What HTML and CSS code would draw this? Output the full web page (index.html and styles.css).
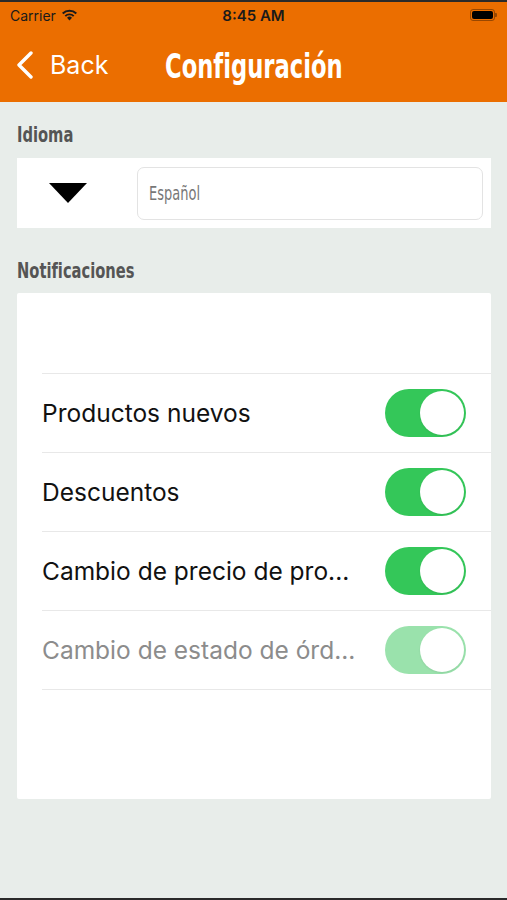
FILE: index.html
```html
<!DOCTYPE html>
<html lang="es">
    <head>
        <meta charset="UTF-8">
        <meta name="viewport" content="width=device-width, initial-scale=1.0">
        <title>Configuración</title>
        <link rel="stylesheet" href="styles.css">
    </head>

    <body>
        <div id="header">
            <div class="statusBar">
                <div class="carrier">
                    <span>Carrier</span>
                    <svg width="17" height="12" viewBox="0 0 17 12">
                        <path d="M8.5 11.5 L6 8.8 A3.6 3.6 0 0 1 11 8.8 Z" fill="#1a1a1a"/>
                        <path d="M3.6 6.4 A7 7 0 0 1 13.4 6.4 L12 7.8 A5 5 0 0 0 5 7.8 Z" fill="#1a1a1a"/>
                        <path d="M1 3.8 A10.8 10.8 0 0 1 16 3.8 L14.6 5.2 A8.8 8.8 0 0 0 2.4 5.2 Z" fill="#1a1a1a"/>
                    </svg>
                </div>
                <div class="time">8:45 AM</div>
                <div class="battery">
                    <div class="batteryBody"><div class="batteryFill"></div></div>
                    <div class="batteryTip"></div>
                </div>
            </div>
            <div class="navBar">
                <div class="back">
                    <svg width="18" height="28" viewBox="0 0 18 28">
                        <path d="M15 2 L3 14 L15 26" fill="none" stroke="#fff" stroke-width="3.4" stroke-linecap="round" stroke-linejoin="round"/>
                    </svg>
                    <span>Back</span>
                </div>
                <h1>Configuración</h1>
            </div>
        </div>

        <div id="content">
            <h2 class="sectionTitle"><span>Idioma</span></h2>
            <div class="langBox">
                <div class="arrowCell"><div class="arrow"></div></div>
                <div class="langInput"><span>Español</span></div>
            </div>

            <h2 class="sectionTitle second"><span>Notificaciones</span></h2>
            <div class="card">
                <div class="cardTop"></div>
                <div class="row">
                    <span class="rowText">Productos nuevos</span>
                    <div class="toggle"><div class="knob"></div></div>
                </div>
                <div class="row">
                    <span class="rowText">Descuentos</span>
                    <div class="toggle"><div class="knob"></div></div>
                </div>
                <div class="row">
                    <span class="rowText">Cambio de precio de pro...</span>
                    <div class="toggle"><div class="knob"></div></div>
                </div>
                <div class="row disabled">
                    <span class="rowText">Cambio de estado de órd...</span>
                    <div class="toggle"><div class="knob"></div></div>
                </div>
            </div>
        </div>
    </body>
</html>
```

FILE: styles.css
```css
html{
    background: #e8edea;
}

body{
    margin: 0;
    height: 900px;
    box-sizing: border-box;
    background: #e8edea;
    border-top: 2px solid #2a2a2a;
    border-bottom: 2px solid #2a2a2a;
    font-family: Inter, "Liberation Sans", sans-serif;
    overflow: hidden;
}

#header{
    background-color: rgb(235, 110, 0);
    height: 100px;
}

.statusBar{
    height: 26px;
    display: flex;
    align-items: center;
    justify-content: space-between;
    padding: 0 10px 0 10px;
    color: #1a1a1a;
    font-size: 14px;
}

.carrier{
    display: flex;
    align-items: center;
    gap: 5px;
    width: 120px;
}

.time{
    font-weight: 600;
    font-size: 15px;
}

.battery{
    width: 120px;
    display: flex;
    justify-content: flex-end;
    align-items: center;
}

.batteryBody{
    border: 1px solid rgba(0, 0, 0, 0.35);
    border-radius: 3px;
    padding: 1px;
    box-sizing: border-box;
    width: 25px;
    height: 12px;
}

.batteryFill{
    background: #000;
    width: 100%;
    height: 100%;
    border-radius: 2px;
}

.batteryTip{
    width: 2px;
    height: 4px;
    background: rgba(0, 0, 0, 0.35);
    border-radius: 0 1px 1px 0;
}

.navBar{
    height: 74px;
    display: flex;
    align-items: center;
    padding-left: 16px;
}

.back{
    display: flex;
    align-items: center;
    gap: 16px;
    color: #fff;
    font-size: 25px;
    width: 149px;
}

h1{
    margin: 0;
    color: #fff;
    font-family: "DejaVu Sans Condensed", sans-serif;
    font-weight: bold;
    font-size: 30px;
    transform: scale(0.84, 1.12);
    transform-origin: left center;
    padding-top: 3px;
}

#content{
    padding: 0 16px 0 17px;
}

.sectionTitle{
    margin: 20px 0 12px 0;
    font-family: "DejaVu Sans Condensed", sans-serif;
    font-weight: bold;
    font-size: 19px;
    line-height: 24px;
    color: #555;
}

.sectionTitle span{
    display: inline-block;
    transform: scale(0.86, 1.15);
    transform-origin: left center;
}

.second{
    margin-top: 30px;
    margin-bottom: 11px;
}

.langBox{
    background: #fff;
    height: 70px;
    display: flex;
    align-items: center;
}

.arrowCell{
    width: 120px;
    padding-left: 32px;
    box-sizing: border-box;
}

.arrow{
    width: 0;
    height: 0;
    border-left: 19px solid transparent;
    border-right: 19px solid transparent;
    border-top: 20px solid #000;
}

.langInput{
    flex: 1;
    height: 53px;
    margin-right: 8px;
    border: 1px solid #e3e3e3;
    border-radius: 7px;
    box-sizing: border-box;
    display: flex;
    align-items: center;
    padding-left: 11px;
    font-family: "DejaVu Sans Condensed", sans-serif;
    font-size: 17px;
    color: #777;
}

.langInput span{
    display: inline-block;
    transform: scale(0.85, 1.12);
    transform-origin: left center;
}

.card{
    background: #fff;
    height: 506px;
    border-radius: 2px;
}

.cardTop{
    height: 80px;
}

.row{
    margin-left: 25px;
    height: 78px;
    border-bottom: 1px solid #e8e8e8;
    display: flex;
    align-items: center;
    justify-content: space-between;
    padding-right: 25px;
}

.cardTop + .row{
    border-top: 1px solid #e8e8e8;
}

.rowText{
    font-size: 24.5px;
    color: #111;
}

.toggle{
    width: 81px;
    height: 48px;
    border-radius: 24px;
    background: #34c759;
    position: relative;
}

.knob{
    position: absolute;
    right: 2px;
    top: 2px;
    width: 44px;
    height: 44px;
    border-radius: 50%;
    background: #fff;
    box-shadow: 0 1px 2px rgba(0, 0, 0, 0.08);
}

.disabled .rowText{
    color: #8c8c8c;
}

.disabled .toggle{
    background: #9ae2ac;
}
```
